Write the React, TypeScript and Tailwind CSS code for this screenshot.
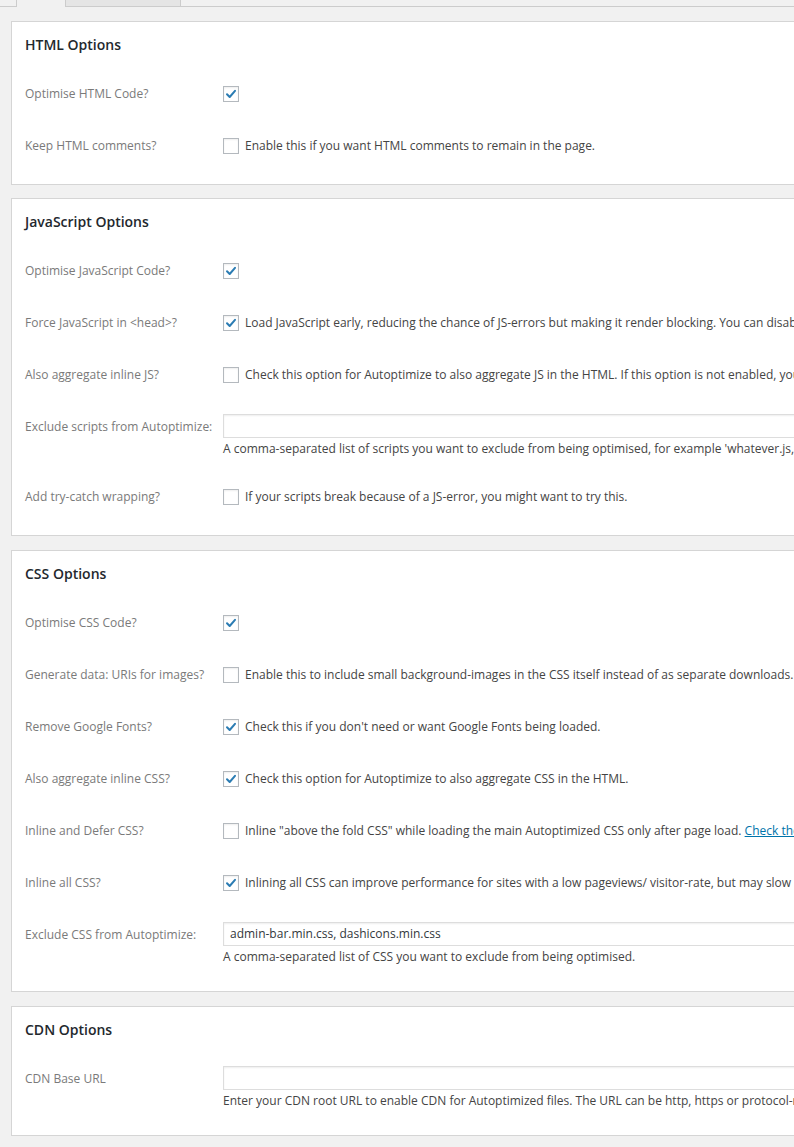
import React from 'react';

type Row =
  | { kind: 'check'; label: string; checked: boolean; text?: string; link?: string }
  | { kind: 'input'; label: string; value: string; desc: string };

type Section = { title: string; rows: Row[] };

const sections: Section[] = [
  {
    title: 'HTML Options',
    rows: [
      { kind: 'check', label: 'Optimise HTML Code?', checked: true },
      { kind: 'check', label: 'Keep HTML comments?', checked: false, text: 'Enable this if you want HTML comments to remain in the page.' },
    ],
  },
  {
    title: 'JavaScript Options',
    rows: [
      { kind: 'check', label: 'Optimise JavaScript Code?', checked: true },
      {
        kind: 'check',
        label: 'Force JavaScript in <head>?',
        checked: true,
        text: "Load JavaScript early, reducing the chance of JS-errors but making it render blocking. You can disable this if you're not aggregating inline JS and you want your page to load faster.",
      },
      {
        kind: 'check',
        label: 'Also aggregate inline JS?',
        checked: false,
        text: 'Check this option for Autoptimize to also aggregate JS in the HTML. If this option is not enabled, you have to enable "Force JavaScript in <head>".',
      },
      {
        kind: 'input',
        label: 'Exclude scripts from Autoptimize:',
        value: '',
        desc: "A comma-separated list of scripts you want to exclude from being optimised, for example 'whatever.js, another.js' (without the quotes) to exclude those scripts.",
      },
      { kind: 'check', label: 'Add try-catch wrapping?', checked: false, text: 'If your scripts break because of a JS-error, you might want to try this.' },
    ],
  },
  {
    title: 'CSS Options',
    rows: [
      { kind: 'check', label: 'Optimise CSS Code?', checked: true },
      {
        kind: 'check',
        label: 'Generate data: URIs for images?',
        checked: false,
        text: 'Enable this to include small background-images in the CSS itself instead of as separate downloads.',
      },
      { kind: 'check', label: 'Remove Google Fonts?', checked: true, text: "Check this if you don't need or want Google Fonts being loaded." },
      { kind: 'check', label: 'Also aggregate inline CSS?', checked: true, text: 'Check this option for Autoptimize to also aggregate CSS in the HTML.' },
      {
        kind: 'check',
        label: 'Inline and Defer CSS?',
        checked: false,
        text: 'Inline "above the fold CSS" while loading the main Autoptimized CSS only after page load. ',
        link: 'Check the FAQ for more info.',
      },
      {
        kind: 'check',
        label: 'Inline all CSS?',
        checked: true,
        text: 'Inlining all CSS can improve performance for sites with a low pageviews/ visitor-rate, but may slow down performance otherwise.',
      },
      {
        kind: 'input',
        label: 'Exclude CSS from Autoptimize:',
        value: 'admin-bar.min.css, dashicons.min.css',
        desc: 'A comma-separated list of CSS you want to exclude from being optimised.',
      },
    ],
  },
  {
    title: 'CDN Options',
    rows: [
      {
        kind: 'input',
        label: 'CDN Base URL',
        value: '',
        desc: 'Enter your CDN root URL to enable CDN for Autoptimized files. The URL can be http, https or protocol-relative.',
      },
    ],
  },
];

function Checkbox({ checked }: { checked: boolean }) {
  return (
    <span className="flex h-[16px] w-[16px] shrink-0 items-center justify-center border border-[#b4b9be] bg-white shadow-[inset_0_1px_2px_rgba(0,0,0,0.07)]">
      {checked && (
        <svg width="12" height="12" viewBox="0 0 12 12">
          <path d="M2 6.2 L4.7 9 L10 2.8" fill="none" stroke="#2b7cb3" strokeWidth="2" strokeLinecap="round" strokeLinejoin="round" />
        </svg>
      )}
    </span>
  );
}

function OptionRow({ row }: { row: Row }) {
  if (row.kind === 'input') {
    return (
      <div className="flex h-[70px]">
        <div className="w-[198px] shrink-0 pt-[18px] text-[#7a7a7a]">{row.label}</div>
        <div className="flex flex-col pt-[14px]">
          <div className="flex h-[24px] w-[640px] items-center border border-[#ddd] bg-white px-[6px] text-[#32373c] shadow-[inset_0_1px_2px_rgba(0,0,0,0.07)]">
            {row.value}
          </div>
          <div className="mt-[1px] whitespace-nowrap leading-[20px] text-[#444]">{row.desc}</div>
        </div>
      </div>
    );
  }
  return (
    <div className="flex h-[52px] items-center pt-[1px]">
      <div className="w-[198px] shrink-0 text-[#7a7a7a]">{row.label}</div>
      <Checkbox checked={row.checked} />
      {row.text && (
        <span className="ml-[6px] whitespace-nowrap text-[#444]">
          {row.text}
          {row.link && <span className="text-[#0073aa] underline">{row.link}</span>}
        </span>
      )}
    </div>
  );
}

export default function App() {
  return (
    <div
      className="min-h-[1147px] w-[794px] overflow-hidden bg-[#f1f1f1] text-[12px]"
      style={{ fontFamily: '"Open Sans", "Noto Sans", sans-serif' }}
    >
      {/* tabs, cut off at the top */}
      <div className="flex h-[7px]">
        <div className="w-[16px] border-b border-[#ccc]" />
        <div className="w-[50px] border-x border-[#ccc] bg-[#f1f1f1]" />
        <div className="w-[115px] border-b border-r border-[#ccc] bg-[#e5e5e5]" />
        <div className="flex-1 border-b border-[#ccc]" />
      </div>

      <div className="flex flex-col pl-[11px] pt-[14px]">
        {sections.map((section, i) => (
          <div
            key={section.title}
            className={`w-[900px] border border-[#d5d5d5] bg-white pb-[13px] pl-[13px] ${i === 0 ? '' : i === 1 ? 'mt-[13px]' : 'mt-[14px]'}`}
          >
            <div className="flex h-[45px] items-center pb-[1px] text-[14px] font-semibold text-[#23282d]">{section.title}</div>
            {section.rows.map((row) => (
              <OptionRow key={row.label} row={row} />
            ))}
          </div>
        ))}
      </div>
    </div>
  );
}
